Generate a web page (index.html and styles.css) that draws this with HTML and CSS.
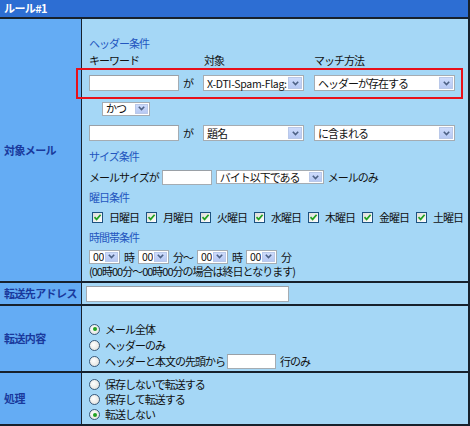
FILE: index.html
```html
<!DOCTYPE html>
<html lang="ja">
<head>
<meta charset="utf-8">
<link rel="stylesheet" href="styles.css">
</head>
<body>
<div class="frame">
  <div class="title">ルール#1</div>

  <div class="row r1">
    <div class="lbl">対象メール</div>
    <div class="cell c1">
      <div class="sh sh1">ヘッダー条件</div>
      <div class="colhead"><span>キーワード</span><span>対象</span><span>マッチ方法</span></div>
      <div class="kw kw1">
        <div class="kwc"><span class="inp w90"></span><span class="ga">が</span></div>
        <span class="sel w101"><span class="st lat">X-DTI-Spam-Flag:</span><span class="sb"><svg width="7" height="5" viewBox="0 0 7 5"><path d="M0.8 0.8 L3.5 3.6 L6.2 0.8" fill="none" stroke="#4d6185" stroke-width="1.6"/></svg></span></span>
        <span class="sel w141"><span class="st">ヘッダーが存在する</span><span class="sb"><svg width="7" height="5" viewBox="0 0 7 5"><path d="M0.8 0.8 L3.5 3.6 L6.2 0.8" fill="none" stroke="#4d6185" stroke-width="1.6"/></svg></span></span>
      </div>
      <div class="and"><span class="sel sm w48"><span class="st">かつ</span><span class="sb"><svg width="7" height="5" viewBox="0 0 7 5"><path d="M0.8 0.8 L3.5 3.6 L6.2 0.8" fill="none" stroke="#4d6185" stroke-width="1.6"/></svg></span></span></div>
      <div class="kw kw2">
        <div class="kwc"><span class="inp w90"></span><span class="ga">が</span></div>
        <span class="sel w101"><span class="st">題名</span><span class="sb"><svg width="7" height="5" viewBox="0 0 7 5"><path d="M0.8 0.8 L3.5 3.6 L6.2 0.8" fill="none" stroke="#4d6185" stroke-width="1.6"/></svg></span></span>
        <span class="sel w141"><span class="st">に含まれる</span><span class="sb"><svg width="7" height="5" viewBox="0 0 7 5"><path d="M0.8 0.8 L3.5 3.6 L6.2 0.8" fill="none" stroke="#4d6185" stroke-width="1.6"/></svg></span></span>
      </div>
      <div class="sh sh2">サイズ条件</div>
      <div class="size">
        <span class="txt">メールサイズが</span>
        <span class="inp sm w50"></span>
        <span class="sel sm w108"><span class="st">バイト以下である</span><span class="sb"><svg width="7" height="5" viewBox="0 0 7 5"><path d="M0.8 0.8 L3.5 3.6 L6.2 0.8" fill="none" stroke="#4d6185" stroke-width="1.6"/></svg></span></span>
        <span class="txt">メールのみ</span>
      </div>
      <div class="sh sh3">曜日条件</div>
      <div class="days">
        <span class="day"><span class="cb"><svg width="9" height="9" viewBox="0 0 9 9"><path d="M1.5 4.2 L3.6 6.4 L7.6 1.8" fill="none" stroke="#21a121" stroke-width="1.7"/></svg></span>日曜日</span>
        <span class="day"><span class="cb"><svg width="9" height="9" viewBox="0 0 9 9"><path d="M1.5 4.2 L3.6 6.4 L7.6 1.8" fill="none" stroke="#21a121" stroke-width="1.7"/></svg></span>月曜日</span>
        <span class="day"><span class="cb"><svg width="9" height="9" viewBox="0 0 9 9"><path d="M1.5 4.2 L3.6 6.4 L7.6 1.8" fill="none" stroke="#21a121" stroke-width="1.7"/></svg></span>火曜日</span>
        <span class="day"><span class="cb"><svg width="9" height="9" viewBox="0 0 9 9"><path d="M1.5 4.2 L3.6 6.4 L7.6 1.8" fill="none" stroke="#21a121" stroke-width="1.7"/></svg></span>水曜日</span>
        <span class="day"><span class="cb"><svg width="9" height="9" viewBox="0 0 9 9"><path d="M1.5 4.2 L3.6 6.4 L7.6 1.8" fill="none" stroke="#21a121" stroke-width="1.7"/></svg></span>木曜日</span>
        <span class="day"><span class="cb"><svg width="9" height="9" viewBox="0 0 9 9"><path d="M1.5 4.2 L3.6 6.4 L7.6 1.8" fill="none" stroke="#21a121" stroke-width="1.7"/></svg></span>金曜日</span>
        <span class="day"><span class="cb"><svg width="9" height="9" viewBox="0 0 9 9"><path d="M1.5 4.2 L3.6 6.4 L7.6 1.8" fill="none" stroke="#21a121" stroke-width="1.7"/></svg></span>土曜日</span>
      </div>
      <div class="sh sh4">時間帯条件</div>
      <div class="time">
        <span class="sel sm w31"><span class="st lat">00</span><span class="sb"><svg width="7" height="5" viewBox="0 0 7 5"><path d="M0.8 0.8 L3.5 3.6 L6.2 0.8" fill="none" stroke="#4d6185" stroke-width="1.6"/></svg></span></span>
        <span class="txt">時</span>
        <span class="sel sm w31"><span class="st lat">00</span><span class="sb"><svg width="7" height="5" viewBox="0 0 7 5"><path d="M0.8 0.8 L3.5 3.6 L6.2 0.8" fill="none" stroke="#4d6185" stroke-width="1.6"/></svg></span></span>
        <span class="txt">分〜</span>
        <span class="sel sm w31"><span class="st lat">00</span><span class="sb"><svg width="7" height="5" viewBox="0 0 7 5"><path d="M0.8 0.8 L3.5 3.6 L6.2 0.8" fill="none" stroke="#4d6185" stroke-width="1.6"/></svg></span></span>
        <span class="txt">時</span>
        <span class="sel sm w31"><span class="st lat">00</span><span class="sb"><svg width="7" height="5" viewBox="0 0 7 5"><path d="M0.8 0.8 L3.5 3.6 L6.2 0.8" fill="none" stroke="#4d6185" stroke-width="1.6"/></svg></span></span>
        <span class="txt">分</span>
      </div>
      <div class="note">(00時00分～00時00分の場合は終日となります)</div>
    </div>
  </div>

  <div class="row r2">
    <div class="lbl">転送先アドレス</div>
    <div class="cell c2"><span class="inp w203"></span></div>
  </div>

  <div class="row r3">
    <div class="lbl">転送内容</div>
    <div class="cell c3">
      <div class="opt"><span class="rd on"></span>メール全体</div>
      <div class="opt"><span class="rd"></span>ヘッダーのみ</div>
      <div class="opt"><span class="rd"></span>ヘッダーと本文の先頭から<span class="inp sm w49 lines"></span>行のみ</div>
    </div>
  </div>

  <div class="row r4">
    <div class="lbl">処理</div>
    <div class="cell c4">
      <div class="opt"><span class="rd"></span>保存しないで転送する</div>
      <div class="opt"><span class="rd"></span>保存して転送する</div>
      <div class="opt"><span class="rd on"></span>転送しない</div>
    </div>
  </div>

  <div class="redbox"></div>
</div>
</body>
</html>
```

FILE: styles.css
```css
* { box-sizing: border-box; }
html, body { margin: 0; padding: 0; background: #ffffff; }
body {
  font-family: "Noto Sans CJK JP", "DejaVu Sans", sans-serif;
  font-size: 11px;
  line-height: 13px;
  letter-spacing: -1px;
  color: #111;
}
.frame {
  position: relative;
  width: 470px;
  height: 426px;
  border-right: 2px solid #17212c;
  border-bottom: 1px solid #17212c;
  background: #a5d7f6;
  overflow: hidden;
}
.title {
  height: 19px;
  background: #2d6ed3;
  border-bottom: 2px solid #17212c;
  color: #fff;
  font-weight: bold;
  font-size: 11px;
  letter-spacing: -0.6px;
  padding-left: 4px;
  line-height: 17px;
}
.row {
  display: grid;
  grid-template-columns: 82px 1fr;
  border-bottom: 2px solid #17212c;
}
.r1 { height: 264px; }
.r2 { height: 23px; }
.r3 { height: 67px; }
.r4 { height: 52px; border-bottom: 1px solid #17212c; }
.lbl {
  background: #64acf4;
  border-right: 1px solid #17212c;
  color: #19399c;
  font-weight: bold;
  font-size: 11px;
  letter-spacing: -0.6px;
  padding-left: 4px;
  display: flex;
  align-items: center;
}
.cell { padding-left: 7px; }

.sh { color: #2356bf; height: 14px; line-height: 14px; }
.sh1 { margin-top: 17px; }
.colhead {
  margin-top: 3px;
  height: 14px;
  line-height: 14px;
  display: grid;
  grid-template-columns: 115px 110px auto;
}
.kw {
  display: grid;
  grid-template-columns: 114px 111px 142px;
  align-items: center;
}
.kw1 { height: 32px; }
.kw2 { height: 30px; }
.kwc { display: flex; align-items: center; }
.ga { margin-left: 4px; }
.and { height: 19px; display: flex; align-items: center; padding-left: 13px; }
.sh2 { height: 16px; line-height: 16px; }
.size { height: 26px; display: flex; align-items: center; }
.size .inp { margin-left: 3px; }
.size .sel { margin-left: 4px; }
.size .txt:last-child { margin-left: 4px; }
.days { height: 26px; display: flex; align-items: center; padding-left: 3px; }
.day { width: 54px; display: flex; align-items: center; }
.cb {
  width: 11px; height: 11px;
  border: 1px solid #1c5180;
  background: linear-gradient(135deg, #dcdcd7, #ffffff);
  margin-right: 6px;
  display: flex; align-items: center; justify-content: center;
}
.time { margin-top: 5px; height: 15px; display: flex; align-items: center; gap: 4px; }
.time .txt { line-height: 12px; }
.note { height: 12px; line-height: 12px; margin-top: 1px; }

.inp {
  display: inline-block;
  height: 16px;
  background: #fff;
  border: 1px solid #a5acb2;
  border-top-color: #9aa0a6;
}
.inp.sm { height: 15px; }
.w90 { width: 90px; }
.w50 { width: 50px; }
.w49 { width: 49px; }
.w203 { width: 203px; }

.sel {
  display: inline-flex;
  align-items: stretch;
  height: 16px;
  background: #fff;
  border: 1px solid #a5acb2;
}
.sel.sm { height: 14px; }
.st {
  flex: 1;
  min-width: 0;
  padding-left: 3px;
  white-space: nowrap;
  overflow-x: clip;
  display: flex;
  align-items: center;
  line-height: 11px;
}
.lat { letter-spacing: -0.3px; font-size: 10.5px; }
.sb {
  flex: none;
  width: 14px;
  margin: 1px;
  background: linear-gradient(#cddbfc, #b7c9f3);
  border: 1px solid #b9c8e9;
  display: flex; align-items: center; justify-content: center;
}
.sel.sm .sb { width: 13px; }
.w101 { width: 101px; }
.w141 { width: 141px; }
.w48 { width: 48px; }
.w108 { width: 108px; }
.w31 { width: 31px; }

.c2 { display: flex; align-items: center; padding-left: 4px; }
.c3 { padding-top: 15px; }
.c4 { padding-top: 4px; }
.opt { height: 16px; display: flex; align-items: center; }
.c4 .opt { height: 15px; }
.rd {
  flex: none;
  width: 11px; height: 11px;
  border-radius: 50%;
  border: 1px solid #3b5a7a;
  background: radial-gradient(circle at 40% 40%, #ffffff, #dcdcd7);
  margin-right: 5px;
  position: relative;
}
.rd.on::after {
  content: "";
  position: absolute;
  left: 2.5px; top: 2.5px;
  width: 4px; height: 4px;
  border-radius: 50%;
  background: #21a121;
}
.lines { margin: 0 4px 0 2px; }

.redbox {
  position: absolute;
  left: 76px; top: 68px;
  width: 387px; height: 31px;
  border: 2px solid #e8101a;
}
```
